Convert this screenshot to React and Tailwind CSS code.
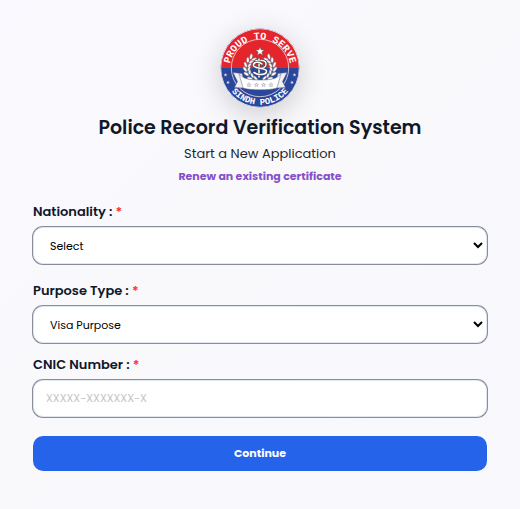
import { useState } from 'react';

const laurel = [
  [-5, 13, 75], [-9, 10, 52], [-12, 6, 30], [-13, 2, 8], [-12.5, -2, -8], [-10.5, -6, -28], [-7.5, -9, -42],
];

const control =
  'w-full h-[37px] rounded-[10px] border border-slate-200 bg-white px-3 text-[11px] text-black ring-1 ring-gray-500/80 outline-none focus:ring-blue-600';

function Star({ x, y, r, fill = '#fff', stroke = 'none' }) {
  const points = Array.from({ length: 10 }, (_, i) => {
    const d = i % 2 ? r * 0.42 : r;
    const a = (Math.PI / 5) * i - Math.PI / 2;
    return `${x + d * Math.cos(a)},${y + d * Math.sin(a)}`;
  }).join(' ');
  return <polygon points={points} fill={fill} stroke={stroke} strokeWidth="0.5" />;
}

function Crest() {
  return (
    <svg
      viewBox="0 0 80 80"
      className="w-20 h-20 rounded-full shadow-[0_6px_28px_rgba(0,0,0,0.18)]"
      role="img"
      aria-label="Sindh Police"
    >
      <defs>
        <path id="arc-top" d="M9.2 42 A30.8 30.8 0 1 1 70.8 42" />
        <path id="arc-bottom" d="M3.2 40 A36.8 36.8 0 0 0 76.8 40" />
      </defs>
      <circle cx="40" cy="40" r="39.5" fill="#2b479c" />
      <path d="M.5 40a39.5 39.5 0 0 1 79 0z" fill="#e5252c" />
      <circle cx="40" cy="40" r="39.3" fill="none" stroke="#d9d6e6" strokeWidth="1" />
      <circle cx="40" cy="40" r="28.7" fill="none" stroke="#f0dfe8" strokeWidth="0.8" />

      <g fill="#fff" textAnchor="middle" className="font-['Liberation_Mono',monospace] font-bold">
        <text fontSize="10">
          <textPath href="#arc-top" startOffset="50%">PROUD TO SERVE</textPath>
        </text>
        <text fontSize="9">
          <textPath href="#arc-bottom" startOffset="50%">SINDH POLICE</textPath>
        </text>
      </g>
      <Star x={5.5} y={47} r={2} fill="#d5d8e8" />
      <Star x={74.5} y={47} r={2} fill="#d5d8e8" />
      <Star x={8} y={54.5} r={2} fill="#d5d8e8" />
      <Star x={72} y={54.5} r={2} fill="#d5d8e8" />

      {/* wreath */}
      <g transform="translate(40 39)">
        {[1, -1].map((side) => (
          <g key={side} transform={`scale(${side} 1)`}>
            <path d="M-3 14C-16 12-16-4-7-11" fill="none" stroke="#6d6b76" strokeWidth="1.4" />
            {laurel.map(([x, y, a]) => (
              <g key={a} transform={`translate(${x} ${y}) rotate(${-a})`}>
                <ellipse cx="-1.7" cy="-1" rx="1.3" ry="2.8" fill="#fff" stroke="#77757f" strokeWidth="0.4" transform="rotate(-28)" />
                <ellipse cx="1.7" cy="-1" rx="1.2" ry="2.6" fill="#f2f2f4" stroke="#77757f" strokeWidth="0.4" transform="rotate(28)" />
              </g>
            ))}
          </g>
        ))}
        {/* monogram */}
        <g fill="none" strokeLinecap="round">
          <path d="M-4-6.5H2Q6.5-6 6-2.5T1 .8H-4" stroke="#3d3b43" strokeWidth="2.6" />
          <path d="M-4-6.5H2Q6.5-6 6-2.5T1 .8H-4" stroke="#fff" strokeWidth="1.5" />
          <path d="M-1-8V10" stroke="#3d3b43" strokeWidth="2.6" />
          <path d="M-1-8V10" stroke="#fff" strokeWidth="1.5" />
          <path d="M2-3C-1-6-7-5-6.5-1.5S6 .5 6.5 4-1 9-6 5.5" stroke="#3d3b43" strokeWidth="2.6" />
          <path d="M2-3C-1-6-7-5-6.5-1.5S6 .5 6.5 4-1 9-6 5.5" stroke="#fff" strokeWidth="1.6" />
        </g>
      </g>
      <Star x={40} y={23.5} r={4.8} stroke="#50434a" />

      {/* ribbon */}
      <path d="M13 44.5l9 1 3 10-2 4.5-8.5-.5 3-6z" fill="#f1f1f5" stroke="#5b617c" strokeWidth="0.5" />
      <path d="M67 44.5l-9 1-3 10 2 4.5 8.5-.5-3-6z" fill="#f1f1f5" stroke="#5b617c" strokeWidth="0.5" />
      <path d="M19 45.5c4 6 12 6.5 21 6.5s17-.5 21-6.5L57 60c-5 1.5-11 1.8-17 1.8S28 61.5 23 60z" fill="#fff" stroke="#5b617c" strokeWidth="0.5" />
      {[29, 36.5, 43.5, 51].map((x) => (
        <Star key={x} x={x} y={57} r={2.2} fill="#f4f4f6" stroke="#9a9aa4" />
      ))}
    </svg>
  );
}

function Label({ htmlFor, children }) {
  return (
    <label htmlFor={htmlFor} className="block mb-[5px] text-[13px] leading-5 font-semibold text-slate-900">
      {children} : <span className="text-red-500">*</span>
    </label>
  );
}

export default function App() {
  const [nationality, setNationality] = useState('');
  const [purpose, setPurpose] = useState('visa');
  const [cnic, setCnic] = useState('');

  return (
    <main className="min-h-screen bg-linear-to-br from-[#f9f9ff] via-[#f9f9fc] to-[#f8f8fd] px-[33px] pt-7 pb-9 font-['Poppins','Inter',sans-serif]">
      <header className="flex flex-col items-center text-center">
        <Crest />
        <h1 className="mt-1 text-[19px] leading-8 font-semibold text-slate-900">Police Record Verification System</h1>
        <p className="text-[13px] leading-5 text-neutral-800">Start a New Application</p>
        <a href="#renew" className="mt-0.5 text-[11px] leading-5 font-bold text-[#8550c8]">
          Renew an existing certificate
        </a>
      </header>

      <form className="mt-4" onSubmit={(e) => e.preventDefault()}>
        <div className="mb-[17px]">
          <Label htmlFor="nationality">Nationality</Label>
          <select id="nationality" className={control} value={nationality} onChange={(e) => setNationality(e.target.value)}>
            <option value="">Select</option>
          </select>
        </div>
        <div className="mb-3">
          <Label htmlFor="purpose">Purpose Type</Label>
          <select id="purpose" className={control} value={purpose} onChange={(e) => setPurpose(e.target.value)}>
            <option value="visa">Visa Purpose</option>
          </select>
        </div>
        <div className="mb-[19px]">
          <Label htmlFor="cnic">CNIC Number</Label>
          <input
            id="cnic"
            type="text"
            placeholder="XXXXX-XXXXXXX-X"
            className={`${control} block placeholder:text-[#c4c4c4]`}
            value={cnic}
            onChange={(e) => setCnic(e.target.value)}
          />
        </div>
        <button type="submit" className="block w-full h-[35px] rounded-[10px] bg-[#2563eb] hover:bg-blue-700 text-[11px] font-bold text-white">
          Continue
        </button>
      </form>
    </main>
  );
}
